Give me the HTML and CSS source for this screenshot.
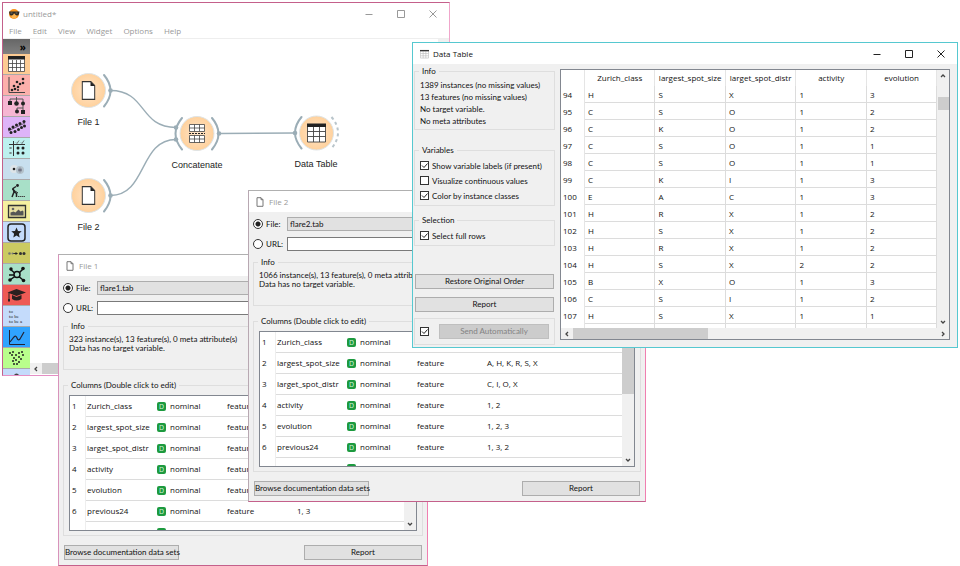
FILE: index.html
```html
<!DOCTYPE html>
<html lang="en">
<head>
    <meta charset="UTF-8">
    <meta name="viewport" content="width=device-width, initial-scale=1.0">
    <title>untitled*</title>
    <link rel="stylesheet" href="styles.css">
</head>
<body>
    <!-- Main workflow window -->
    <div class="window main-window">
        <div class="titlebar">
            <svg class="logo" viewBox="0 0 12 12" width="12" height="12"><circle cx="6" cy="6" r="5" fill="#f7941d"/><circle cx="6" cy="8" r="2.5" fill="#fbb450"/><path d="M1 3.5h10.500l-.5 2.500q-.5 1.500-2 1.500T6.500 5.500h-.7Q5.500 7.500 3.500 7.500T1.500 6z" fill="#2e2a24"/><path d="M2.500 5h2M7.500 5h2" stroke="#9a8a70" stroke-width=".8"/></svg>
            <span class="title">untitled*</span>
            <button class="win-btn" aria-label="Minimize"><svg viewBox="0 0 10 10"><path d="M1.500 5.500h7"/></svg></button>
            <button class="win-btn" aria-label="Maximize"><svg viewBox="0 0 10 10"><path d="M1.500 1.500h7v7h-7z"/></svg></button>
            <button class="win-btn" aria-label="Close"><svg viewBox="0 0 10 10"><path d="M1.500 1.500l7 7M8.500 1.500l-7 7"/></svg></button>
        </div>
        <nav class="menubar">
            <a href="#">File</a>
            <a href="#">Edit</a>
            <a href="#">View</a>
            <a href="#">Widget</a>
            <a href="#">Options</a>
            <a href="#">Help</a>
        </nav>
        <div class="workspace">
            <div class="toolbox">
                <button class="expand" aria-label="Expand">»</button>
                <button class="tool data" aria-label="Data"><svg viewBox="0 0 27 21"><path d="M5.500 3.500h16v14h-16zM5.500 9.500h16M5.500 13.500h16M9.500 6v11M13.500 6v11M17.500 6v11" fill="#fff" stroke="#444" stroke-width=".8"/><path d="M5 2h17v3.500H5z" fill="#222"/></svg></button>
                <button class="tool visualize" aria-label="Visualize"><svg viewBox="0 0 27 21"><path d="M6 2v15.500h16" fill="none" stroke="#444"/><g fill="#222"><circle cx="9" cy="15" r="1.300"/><circle cx="12" cy="14" r="1.300"/><circle cx="11" cy="11" r="1.300"/><circle cx="15" cy="12" r="1.300"/><circle cx="14" cy="7" r="1.300"/><circle cx="17" cy="9" r="1.300"/><circle cx="20" cy="8" r="1.300"/><circle cx="20" cy="4" r="1.300"/><circle cx="15" cy="15" r="1"/></g></svg></button>
                <button class="tool classify" aria-label="Classify"><svg viewBox="0 0 27 21"><path d="M7 7V3h13v4M13.500 1v6M20 9v3h-6v3M20 12v3" fill="none" stroke="#555"/><path d="M5 5h4v4H5zM18 14h4v4h-4z" fill="#222"/><circle cx="13.500" cy="7.500" r="2.300" fill="#222"/><circle cx="20" cy="7.500" r="2" fill="#222"/><circle cx="14" cy="15.500" r="2" fill="#222"/></svg></button>
                <button class="tool regression" aria-label="Regression"><svg viewBox="0 0 27 21"><path d="M5 14L22 6" stroke="#222" stroke-width=".6"/><g fill="#222"><circle cx="6.500" cy="12" r="1.500"/><circle cx="8" cy="15.500" r="1.500"/><circle cx="10" cy="10" r="1.500"/><circle cx="12" cy="14.500" r="1.500"/><circle cx="13.500" cy="8" r="1.500"/><circle cx="15.500" cy="12.500" r="1.500"/><circle cx="17" cy="6.500" r="1.500"/><circle cx="18.500" cy="10.500" r="1.500"/><circle cx="21" cy="4.500" r="1.500"/><circle cx="21.500" cy="9" r="1.500"/></g></svg></button>
                <button class="tool evaluate" aria-label="Evaluate"><svg viewBox="0 0 27 21"><path d="M6 6.500h16M10.500 3v15" stroke="#333"/><path d="M13 4.500l1 1 2-3M18 4.500l1 1 2-3M6.500 9l2 2M8.500 9l-2 2M6.500 14l2 2M8.500 14l-2 2" fill="none" stroke="#555" stroke-width=".8"/><g fill="#222"><circle cx="15" cy="10" r="1.500"/><circle cx="20" cy="10" r="1.500"/><circle cx="15" cy="15" r="1.500"/><circle cx="20" cy="15" r="1.500"/></g></svg></button>
                <button class="tool unsupervised" aria-label="Unsupervised"><svg viewBox="0 0 27 21"><circle cx="11" cy="10" r="4" fill="#dde4e8"/><circle cx="17" cy="11" r="4" fill="#b4c2cb"/><circle cx="11" cy="10" r="1.300" fill="#222"/><path d="M17 8.500v5M15 10l4 2M19 10l-4 2" stroke="#667" stroke-width=".8"/></svg></button>
                <button class="tool spectro" aria-label="Spectroscopy"><svg viewBox="0 0 27 21"><circle cx="14.500" cy="5.500" r="1.400" fill="#222"/><path d="M13 6.500l-3 2 1 3.500-2 5M10 8.500l1.500 3.500 2 1.500v3.500" fill="none" stroke="#222" stroke-width="1.500"/><path d="M9 9l6 4" stroke="#222"/><path d="M15 16.500h7" stroke="#444" stroke-dasharray="1.500 .5"/></svg></button>
                <button class="tool image" aria-label="Image analytics"><svg viewBox="0 0 27 21"><path d="M5.500 4.500h17v12h-17z" fill="#e8dfa0" stroke="#333" stroke-width="1.300"/><path d="M7.500 14.500v-3l3-1 2 1 3-3 2 2 2-1 1 1v4z" fill="#555"/><circle cx="10" cy="8" r="1.300" fill="#666"/></svg></button>
                <button class="tool star" aria-label="Educational"><svg viewBox="0 0 27 21"><rect x="5" y="2" width="17" height="17" rx="3" fill="none" stroke="#222" stroke-width="1.500"/><path d="M13.500 5.500l1.500 3.400 3.700.4-2.800 2.500.8 3.700-3.200-1.900-3.200 1.900.8-3.700-2.800-2.500 3.700-.4z" fill="#222"/></svg></button>
                <button class="tool series" aria-label="Prototypes"><svg viewBox="0 0 27 21"><path d="M10 10.500h4" stroke="#333"/><circle cx="6.500" cy="10.500" r="1.300" fill="#777"/><circle cx="9.500" cy="10.500" r="1" fill="#777"/><path d="M12.500 9l2.500 1.500-2.500 1.500z" fill="#222"/><circle cx="17.500" cy="10.500" r="1.500" fill="#333"/><circle cx="21" cy="10.500" r="1.500" fill="#333"/></svg></button>
                <button class="tool network" aria-label="Network"><svg viewBox="0 0 27 21"><path d="M7 5l7 6 6-6M7 16l7-5 6 5M6 11h7" stroke="#111" stroke-width="1.500" fill="none"/><circle cx="14" cy="10.500" r="3" fill="#abe0c9" stroke="#111" stroke-width="1.500"/><g fill="#111"><circle cx="8" cy="5" r="1.700"/><circle cx="20" cy="4.500" r="1.800"/><circle cx="7" cy="16" r="1.800"/><circle cx="20.500" cy="16.500" r="1.800"/></g></svg></button>
                <button class="tool edu" aria-label="Education"><svg viewBox="0 0 27 21"><path d="M13.500 4L23 7.500 13.500 11 4.500 7.500z" fill="#2a2020"/><path d="M9 10v4q4.500 3 9.500 0v-4l-5 2z" fill="#2a2020"/><path d="M6 8v7" stroke="#2a2020"/><path d="M5 14h2v2.500H5z" fill="#2a2020"/></svg></button>
                <button class="tool text"><span>to<br>to be<br>to be a</span></button>
                <button class="tool timeseries" aria-label="Time series"><svg viewBox="0 0 27 21"><path d="M6.500 3v14.500H22" fill="none" stroke="#223"/><path d="M7 15l4-5q2-2 3 1t3 1l4-7" fill="none" stroke="#223" stroke-width="1.200"/></svg></button>
                <button class="tool scatter" aria-label="Associate"><svg viewBox="0 0 27 21"><g fill="#222"><circle cx="7" cy="5" r="1"/><circle cx="10" cy="4" r="1"/><circle cx="9" cy="7" r="1"/><circle cx="13" cy="7" r="1"/><circle cx="16" cy="5" r="1"/><circle cx="19" cy="4" r="1"/><circle cx="20" cy="7" r="1"/><circle cx="16" cy="9" r="1"/><circle cx="18" cy="11" r="1"/><circle cx="11" cy="10" r="1"/><circle cx="13" cy="12" r="1"/><circle cx="10" cy="13" r="1"/><circle cx="16" cy="14" r="1"/><circle cx="11" cy="16" r="1"/><circle cx="14" cy="16" r="1"/></g></svg></button>
                <button class="tool more" aria-label="More"><svg viewBox="0 0 27 21"><circle cx="13.500" cy="7" r="2.500" fill="#444"/></svg></button>
            </div>
            <div class="canvas">
                <svg class="workflow" viewBox="30 39 408 324" width="408" height="324">
                    <defs>
                        <radialGradient id="nodeFill"><stop offset="0" stop-color="#ffe5ca"/><stop offset="1" stop-color="#ffd19c"/></radialGradient>
                        <symbol id="doc" viewBox="0 0 14 19"><path d="M.7.7h8.600l4 4v13.600H.7z" fill="#fff" stroke="#333" stroke-width="1.200"/><path d="M9 .7l4.300 4.300H9z" fill="#222"/></symbol>
                    </defs>
                    <g class="links">
                        <path d="M110.500 90.500C147 90.500 139 127.500 176 127.500"/>
                        <path d="M110.500 195.500C147 195.500 139 139.500 176 139.500"/>
                        <path d="M219 133.500L295 133"/>
                    </g>
                    <g class="arcs">
                        <path d="M104 75q13 15.500 0 31.500M104 180q13 15.500 0 31.500"/>
                        <path d="M182 118q-13 15.500 0 31.500M212 118q13 15.500 0 31.500M301.500 117q-13 15.500 0 31.500"/>
                        <path class="open" d="M331.500 117q13 15.500 0 31.500"/>
                    </g>
                    <g class="dots">
                        <circle cx="110.500" cy="90.500" r="2.300"/><circle cx="110.500" cy="195.500" r="2.300"/>
                        <circle cx="176" cy="127.500" r="2.300"/><circle cx="176" cy="139.500" r="2.300"/>
                        <circle cx="219" cy="133.500" r="2.300"/><circle cx="295" cy="133" r="2.300"/>
                    </g>
                    <g class="nodes">
                        <circle cx="88.500" cy="90.500" r="17"/><circle cx="88.500" cy="195.500" r="17"/>
                        <circle cx="197" cy="133.500" r="17"/><circle cx="316.500" cy="133" r="17"/>
                    </g>
                    <use href="#doc" x="81.500" y="81" width="14" height="19"/>
                    <use href="#doc" x="81.500" y="186" width="14" height="19"/>
                    <path d="M189.500 124.500h15v7h-15zM189.500 135.500h15v7h-15zM189.500 128h15M189.500 139h15M194.500 124.500v7M199.500 124.500v7M194.500 135.500v7M199.500 135.500v7" fill="#fff" stroke="#444" stroke-width=".8"/>
                    <path d="M189 133.500h16" stroke="#222" stroke-dasharray="2 1"/>
                    <path d="M307.500 125h18v17h-18zM307.500 131.500h18M307.500 136.500h18M313.500 127v15M319.500 127v15" fill="#fff" stroke="#444" stroke-width=".9"/>
                    <path d="M307 123.500h19v3.500h-19z" fill="#222"/>
                    <g class="labels">
                        <text x="88.500" y="125">File 1</text>
                        <text x="88.500" y="230">File 2</text>
                        <text x="197" y="168">Concatenate</text>
                        <text x="316" y="167">Data Table</text>
                    </g>
                </svg>
                <div class="vscroll"></div>
                <div class="hscroll"><svg class="arrow" viewBox="0 0 6 6"><path d="M4 1L2 3l2 2"/></svg><div class="thumb"></div></div>
            </div>
        </div>
    </div>

    <!-- File 1 -->
    <div class="window file-window file-one">
        <div class="titlebar">
            <svg class="doc-icon" viewBox="0 0 8 10"><path d="M1 .7h4l2 2v6.600H1zM5 .7v2h2"/></svg>
            <span class="title">File 1</span>
        </div>
        <div class="file-body">
            <div class="source">
                <label><input type="radio" name="source1" checked>File:</label>
                <select aria-label="File name"><option>flare1.tab</option></select>
            </div>
            <div class="source">
                <label><input type="radio" name="source1">URL:</label>
                <input type="text" aria-label="URL">
            </div>
            <fieldset class="file-info">
                <legend>Info</legend>
                <p>323 instance(s), 13 feature(s), 0 meta attribute(s)</p>
                <p>Data has no target variable.</p>
            </fieldset>
            <fieldset class="columns">
                <legend>Columns (Double click to edit)</legend>
                <div class="list">
                    <table>
                        <colgroup><col class="c-num"><col class="c-name"><col class="c-type"><col class="c-role"><col></colgroup>
                        <tr><th>1</th><td>Zurich_class</td><td><i class="badge">D</i>nominal</td><td>feature</td><td></td></tr>
                        <tr><th>2</th><td>largest_spot_size</td><td><i class="badge">D</i>nominal</td><td>feature</td><td></td></tr>
                        <tr><th>3</th><td>larget_spot_distr</td><td><i class="badge">D</i>nominal</td><td>feature</td><td></td></tr>
                        <tr><th>4</th><td>activity</td><td><i class="badge">D</i>nominal</td><td>feature</td><td></td></tr>
                        <tr><th>5</th><td>evolution</td><td><i class="badge">D</i>nominal</td><td>feature</td><td></td></tr>
                        <tr><th>6</th><td>previous24</td><td><i class="badge">D</i>nominal</td><td>feature</td><td>1, 3</td></tr>
                        <tr><th></th><td></td><td><i class="badge"></i></td><td></td><td></td></tr>
                    </table>
                    <div class="vscroll"><div class="thumb"></div><svg class="arrow" viewBox="0 0 6 6"><path d="M1 2l2 2 2-2"/></svg></div>
                </div>
            </fieldset>
            <div class="actions">
                <button class="btn">Browse documentation data sets</button>
                <button class="btn report">Report</button>
            </div>
        </div>
    </div>

    <!-- File 2 -->
    <div class="window file-window file-two">
        <div class="titlebar">
            <svg class="doc-icon" viewBox="0 0 8 10"><path d="M1 .7h4l2 2v6.600H1zM5 .7v2h2"/></svg>
            <span class="title">File 2</span>
        </div>
        <div class="file-body">
            <div class="source">
                <label><input type="radio" name="source2" checked>File:</label>
                <select aria-label="File name"><option>flare2.tab</option></select>
            </div>
            <div class="source">
                <label><input type="radio" name="source2">URL:</label>
                <input type="text" aria-label="URL">
            </div>
            <fieldset class="file-info">
                <legend>Info</legend>
                <p>1066 instance(s), 13 feature(s), 0 meta attribute(s)</p>
                <p>Data has no target variable.</p>
            </fieldset>
            <fieldset class="columns">
                <legend>Columns (Double click to edit)</legend>
                <div class="list">
                    <table>
                        <colgroup><col class="c-num"><col class="c-name"><col class="c-type"><col class="c-role"><col></colgroup>
                        <tr><th>1</th><td>Zurich_class</td><td><i class="badge">D</i>nominal</td><td></td><td></td></tr>
                        <tr><th>2</th><td>largest_spot_size</td><td><i class="badge">D</i>nominal</td><td>feature</td><td>A, H, K, R, S, X</td></tr>
                        <tr><th>3</th><td>larget_spot_distr</td><td><i class="badge">D</i>nominal</td><td>feature</td><td>C, I, O, X</td></tr>
                        <tr><th>4</th><td>activity</td><td><i class="badge">D</i>nominal</td><td>feature</td><td>1, 2</td></tr>
                        <tr><th>5</th><td>evolution</td><td><i class="badge">D</i>nominal</td><td>feature</td><td>1, 2, 3</td></tr>
                        <tr><th>6</th><td>previous24</td><td><i class="badge">D</i>nominal</td><td>feature</td><td>1, 3, 2</td></tr>
                        <tr><th></th><td></td><td><i class="badge"></i></td><td></td><td></td></tr>
                    </table>
                    <div class="vscroll"><div class="thumb"></div><svg class="arrow" viewBox="0 0 6 6"><path d="M1 2l2 2 2-2"/></svg></div>
                </div>
            </fieldset>
            <div class="actions">
                <button class="btn">Browse documentation data sets</button>
                <button class="btn report">Report</button>
            </div>
        </div>
    </div>

    <!-- Data Table -->
    <div class="window data-window">
        <div class="titlebar">
            <svg class="table-icon" viewBox="0 0 10 10"><path d="M.5 1.500h9v8h-9zM.5 4.500h9M.5 7h9M3.500 2v7.500M6.500 2v7.500" fill="#fff" stroke="#bbb" stroke-width=".7"/><path d="M0 .5h10V2H0z" fill="#333"/></svg>
            <span class="title">Data Table</span>
            <button class="win-btn" aria-label="Minimize"><svg viewBox="0 0 10 10"><path d="M1.500 5.500h7"/></svg></button>
            <button class="win-btn" aria-label="Maximize"><svg viewBox="0 0 10 10"><path d="M1.500 1.500h7v7h-7z"/></svg></button>
            <button class="win-btn" aria-label="Close"><svg viewBox="0 0 10 10"><path d="M1.500 1.500l7 7M8.500 1.500l-7 7"/></svg></button>
        </div>
        <div class="data-body">
            <div class="side">
                <fieldset class="data-info">
                    <legend>Info</legend>
                    <p>1389 instances (no missing values)</p>
                    <p>13 features (no missing values)</p>
                    <p>No target variable.</p>
                    <p>No meta attributes</p>
                </fieldset>
                <fieldset class="variables">
                    <legend>Variables</legend>
                    <label><input type="checkbox" checked>Show variable labels (if present)</label>
                    <label><input type="checkbox">Visualize continuous values</label>
                    <label><input type="checkbox" checked>Color by instance classes</label>
                </fieldset>
                <fieldset class="selection">
                    <legend>Selection</legend>
                    <label><input type="checkbox" checked>Select full rows</label>
                </fieldset>
                <button class="btn restore">Restore Original Order</button>
                <button class="btn">Report</button>
                <div class="send">
                    <input type="checkbox" aria-label="Send automatically" checked>
                    <button class="btn" disabled>Send Automatically</button>
                </div>
            </div>
            <div class="grid">
                <div class="grid-rows">
                    <table>
                        <thead>
                            <tr><th class="num"></th><th>Zurich_class</th><th>largest_spot_size</th><th>larget_spot_distr</th><th>activity</th><th>evolution</th></tr>
                        </thead>
                        <tbody>
                            <tr><th>94</th><td>H</td><td>S</td><td>X</td><td>1</td><td>3</td></tr>
                            <tr><th>95</th><td>C</td><td>S</td><td>O</td><td>1</td><td>2</td></tr>
                            <tr><th>96</th><td>C</td><td>K</td><td>O</td><td>1</td><td>2</td></tr>
                            <tr><th>97</th><td>C</td><td>S</td><td>O</td><td>1</td><td>1</td></tr>
                            <tr><th>98</th><td>C</td><td>S</td><td>O</td><td>1</td><td>1</td></tr>
                            <tr><th>99</th><td>C</td><td>K</td><td>I</td><td>1</td><td>3</td></tr>
                            <tr><th>100</th><td>E</td><td>A</td><td>C</td><td>1</td><td>3</td></tr>
                            <tr><th>101</th><td>H</td><td>R</td><td>X</td><td>1</td><td>2</td></tr>
                            <tr><th>102</th><td>H</td><td>S</td><td>X</td><td>1</td><td>2</td></tr>
                            <tr><th>103</th><td>H</td><td>R</td><td>X</td><td>1</td><td>2</td></tr>
                            <tr><th>104</th><td>H</td><td>S</td><td>X</td><td>2</td><td>2</td></tr>
                            <tr><th>105</th><td>B</td><td>X</td><td>O</td><td>1</td><td>3</td></tr>
                            <tr><th>106</th><td>C</td><td>S</td><td>I</td><td>1</td><td>2</td></tr>
                            <tr><th>107</th><td>H</td><td>S</td><td>X</td><td>1</td><td>1</td></tr>
                            <tr><th></th><td></td><td></td><td></td><td></td><td></td></tr>
                        </tbody>
                    </table>
                    <div class="vscroll"><svg class="arrow" viewBox="0 0 6 6"><path d="M1 4l2-2 2 2"/></svg><div class="thumb"></div><svg class="arrow" viewBox="0 0 6 6"><path d="M1 2l2 2 2-2"/></svg></div>
                </div>
                <div class="hscroll"><svg class="arrow" viewBox="0 0 6 6"><path d="M4 1L2 3l2 2"/></svg><div class="thumb"></div><svg class="arrow" viewBox="0 0 6 6"><path d="M2 1l2 2-2 2"/></svg></div>
            </div>
        </div>
    </div>
</body>
</html>
```
FILE: styles.css
```css
* { box-sizing: border-box; }
body { margin: 0; min-height: 100vh; position: relative; overflow: hidden; background: #fff; color: #111; font: 8px/10px "Open Sans", "Noto Sans", sans-serif; }
p { margin: 0; }
button, input, select { font: inherit; color: inherit; margin: 0; padding: 0; }
button { border: 0; background: none; }

/* Windows on the desktop */
.window { position: absolute; background: #f0f0f0; border: 1px solid; }
.main-window { left: 2px; top: 2px; width: 448px; background: #fff; border-color: #c4608b #f0a6cb #e58fc4 #c4608b; }
.file-window { border-color: #b0b0b0 #f07fb0 #c4608b #b8a8b2; }
.file-one { left: 58px; top: 254px; width: 370px; border-left-color: #d893bb; }
.file-two { left: 248px; top: 190px; width: 398px; }
.data-window { left: 412px; top: 42px; width: 546px; border-color: #56c8d0; }

.titlebar { display: flex; align-items: center; height: 21px; background: #fff; padding-left: 7px; }
.title { flex: 1; color: #999; }
.data-window .title { color: #111; }
.logo { margin: 0 3px 0 -2px; }
.doc-icon { width: 8px; height: 10px; margin-right: 5px; fill: none; stroke: #777; }
.table-icon { width: 9px; height: 10px; margin-right: 4px; }
.win-btn { width: 32px; height: 20px; display: flex; align-items: center; justify-content: center; }
.win-btn svg { width: 10px; height: 10px; fill: none; stroke: #222; stroke-width: 1; }
.main-window .win-btn svg { stroke: #999; }

.menubar { display: flex; gap: 11px; height: 14px; padding-left: 6px; line-height: 14px; }
.menubar a { color: #999; text-decoration: none; }
.workspace { display: flex; height: 337px; border-top: 1px solid #eee; }

/* Widget toolbox */
.toolbox { width: 27px; overflow: hidden; }
.toolbox button { display: block; width: 100%; }
.toolbox .expand { height: 15px; background: linear-gradient(#666, #808080); color: #000; text-align: right; padding-right: 4px; font-size: 10px; font-weight: bold; line-height: 12px; }
.tool { height: 21px; border-bottom: 1px solid #aaa; }
.tool svg { display: block; width: 27px; height: 21px; }
.data { background: #fdcb93; }
.visualize { background: #fcb0ab; }
.classify { background: #f6b6d2; }
.regression { background: #deb4f8; }
.evaluate { background: #bdf1ef; }
.unsupervised { background: #c8dfee; }
.spectro { background: #a8e0c8; }
.image { background: #f6f0a0; }
.star { background: #c4dbfb; }
.series { background: #cbca62; }
.network { background: #a8e0c8; }
.edu { background: #ee5a55; }
.toolbox .text { background: #c4dbfb; font: 5px/5px "Liberation Serif", serif; color: #222; text-align: left; padding-left: 6px; }
.text span { display: block; }
.timeseries { background: #30a3ff; }
.scatter { background: #b9ff8c; }
.more { background: #c4dbfb; }

/* Canvas */
.canvas { flex: 1; display: grid; grid-template-columns: 1fr 11px; grid-template-rows: 1fr 12px; overflow: hidden; }
.workflow { display: block; }
.links path { fill: none; stroke: #9badb6; stroke-width: 1.400; }
.arcs path { fill: none; stroke: #9badb6; stroke-width: 2; stroke-linecap: round; }
.arcs .open { stroke: #b9c5cb; stroke-dasharray: 3 3; stroke-linecap: butt; }
.dots circle { fill: #9badb6; }
.nodes circle { fill: url(#nodeFill); stroke: #dfe4e6; stroke-width: 1; }
.labels text { font: 9px "Liberation Sans", Arial, sans-serif; fill: #222; text-anchor: middle; }

/* Scroll bars */
.vscroll { display: flex; flex-direction: column; align-items: center; width: 12px; background: #f0f0f0; padding: 3px 0; }
.hscroll { display: flex; align-items: center; background: #f0f0f0; padding: 0 3px; height: 11px; }
.thumb { background: #cdcdcd; }
.arrow { width: 6px; height: 6px; flex: none; fill: none; stroke: #444; stroke-width: 1.300; }
.canvas .hscroll .thumb { width: 300px; height: 11px; margin-left: 3px; }

/* Form controls */
.file-body, .side { font-family: Lato, "Liberation Sans", sans-serif; }
fieldset { margin: 0; padding: 0 5px; border: 1px solid #dedede; min-width: 0; }
legend { height: 10px; padding: 0 3px; margin-left: -1px; line-height: 10px; }
.btn { height: 15px; border: 1px solid #adadad; background: #e1e1e1; line-height: 13px; text-align: center; white-space: nowrap; }
input[type="radio"] { appearance: none; width: 10px; height: 10px; border: 1px solid #333; border-radius: 50%; background: #fff; }
input[type="radio"]:checked { background: radial-gradient(circle, #222 0 2px, #fff 3px); }
input[type="checkbox"] { appearance: none; flex: none; width: 9px; height: 9px; border: 1px solid #333; background: #fff; }
input[type="checkbox"]:checked { background: #fff url("data:image/svg+xml,%3Csvg xmlns='http://www.w3.org/2000/svg' viewBox='0 0 7 7'%3E%3Cpath d='M1 3.500l2 2 3.500-4' fill='none' stroke='%23222'/%3E%3C/svg%3E"); }

/* File windows */
.file-body { padding: 5px 4px 5px; }
.source { display: flex; height: 14px; margin-bottom: 6px; }
.source label { display: flex; align-items: center; gap: 3px; width: 34px; }
.source select, .source input[type="text"] { appearance: none; flex: 1; height: 14px; border: 1px solid #adadad; border-radius: 0; background: #e1e1e1; padding: 0 2px; }
.source input[type="text"] { border-color: #7a7a7a; background: #fff; }
.file-info { margin-top: 4px; margin-bottom: 10px; padding: 4px 5px 16px; line-height: 9px; }
.columns { padding: 5px 5px 4px; }
.list { display: flex; height: 136px; overflow: hidden; border: 1px solid #828790; background: #fff; font-family: "Open Sans", "Noto Sans", sans-serif; }
.list table { flex: 1; }
table { table-layout: fixed; width: 100%; border-collapse: separate; border-spacing: 0; }
th { font-weight: normal; }
td, th { padding: 0; white-space: nowrap; }
.list td { height: 21px; padding-left: 1px; border-bottom: 1px solid #dcdcdc; }
.list th { height: 21px; padding-left: 2px; text-align: left; vertical-align: top; line-height: 20px; border-right: 1px solid #eee; }
.c-num { width: 16px; }
.c-name { width: 70px; }
.c-type { width: 70px; }
.c-role { width: 70px; }
.badge { display: inline-block; width: 9px; height: 9px; margin-right: 4px; border-radius: 2px; background: #1d9a3f; color: #d9f5df; font-style: normal; font-size: 7px; line-height: 9px; text-align: center; vertical-align: middle; }
.list .vscroll { justify-content: space-between; padding-top: 0; }
.list .thumb { width: 12px; height: 62px; }
.actions { display: flex; justify-content: space-between; padding: 0 1px; margin-top: 9px; }
.actions .btn { width: 115px; }
.actions .report { width: 118px; }

/* Data Table window */
.data-body { display: flex; gap: 5px; padding: 2px 7px 1px 1px; }
.side { display: flex; flex-direction: column; width: 141px; }
.data-info { padding: 3px 5px 2px; line-height: 12px; white-space: nowrap; }
.variables, .selection { padding: 3px 5px 2px; }
.variables { margin-top: 15px; }
.selection { margin-top: 9px; }
.side label { display: flex; align-items: center; gap: 3px; height: 15px; white-space: nowrap; }
.side > .btn { margin: 8px 1px 0; }
.side > .restore { margin-top: 28px; }
.send { display: flex; align-items: center; gap: 10px; height: 27px; margin-top: 6px; padding: 0 5px; border: 1px solid #dedede; }
.send .btn { flex: 1; border-color: #bfbfbf; background: #ccc; color: #838383; }
.grid { flex: 1; margin: 3px 0 6px; align-self: flex-start; border: 1px solid #828790; background: #fff; }
.grid-rows { display: flex; height: 258px; overflow: hidden; }
.grid thead th { height: 16px; line-height: 16px; text-align: center; border-right: 1px solid #e5e5e5; }
.grid .num { width: 24px; }
.grid tbody th { height: 17px; padding-left: 2px; text-align: left; border-right: 1px solid #e5e5e5; }
.grid td { height: 17px; padding: 1px 0 0 3px; border-right: 1px solid #dcdcdc; border-bottom: 1px solid #dcdcdc; }
.grid .vscroll .thumb { width: 11px; height: 13px; margin: 18px 0 auto; }
.grid .hscroll .thumb { width: 135px; height: 11px; margin: 0 auto 0 3px; }
```
